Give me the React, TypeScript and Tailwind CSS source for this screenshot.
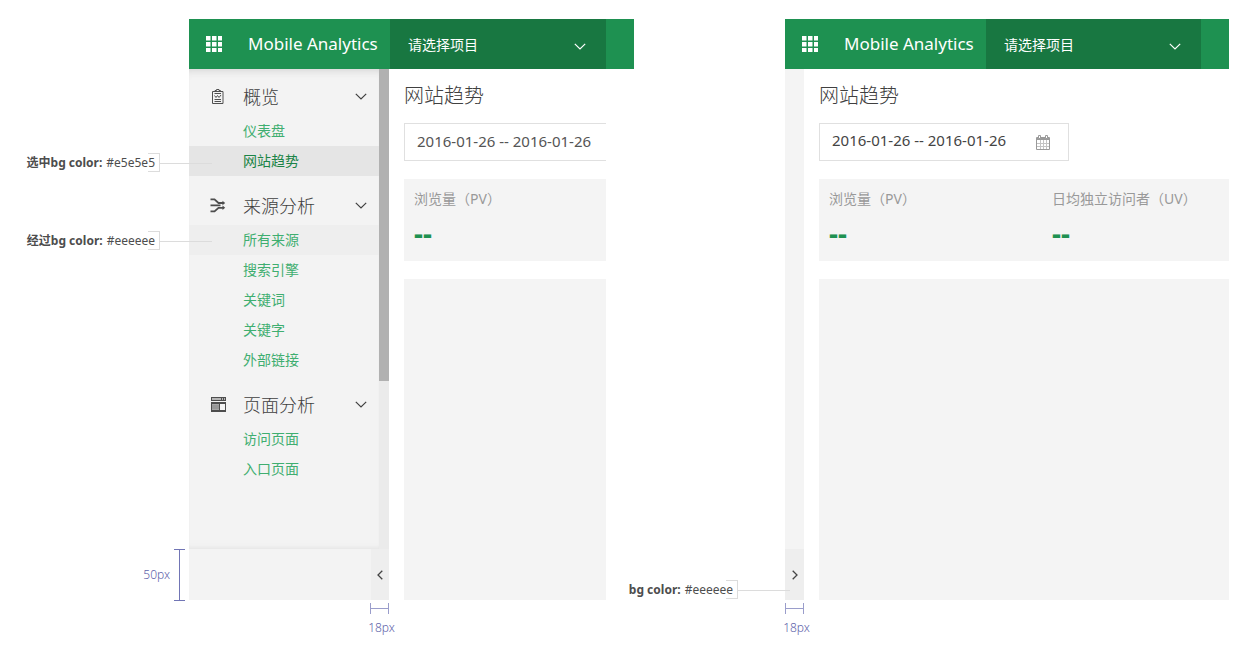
import type { ReactNode } from "react";

type NavItem = { label: string; state?: "selected" | "hover" };
type NavSection = { title: string; icon: ReactNode; items: NavItem[] };

function ReportIcon() {
  return (
    <svg width="12" height="15" viewBox="0 0 12 15" fill="none" stroke="#505050" aria-hidden="true">
      <path d="M.5 2.500h10.500v12H.5z" />
      <path d="M3 2.500v-1h1.500V.5h2.500v1h1.500v1" />
      <path d="M2.500 4.500h6.500M2.500 6.500l1.500 2 1.500-2 1.500 2 2-2.500M2.500 10.500h6.500M2.500 12.500h6.500" />
    </svg>
  );
}

function SourceIcon() {
  return (
    <svg width="16" height="15" viewBox="0 0 16 15" fill="none" stroke="#4d4d4d" strokeWidth="1.800" aria-hidden="true">
      <path d="M.5 1.400h4L8.500 5h5.500M.5 7.400h10M.5 13.400h4L8.500 9.800h5.500" />
      <path d="M12.500 2.800l2.700 2.200-2.700 2.200zM12.500 7.600l2.700 2.200-2.700 2.200z" fill="#4d4d4d" stroke="none" />
    </svg>
  );
}

function PageIcon() {
  return (
    <svg width="15" height="15" viewBox="0 0 15 15" aria-hidden="true">
      <path d="M0 0h15v4H0z" fill="#4d4d4d" />
      <path d="M1 1.300h9v1.400H1zM11 1.300h1v1.400h-1zM13 1.300h1v1.400h-1z" fill="#d8d8d8" />
      <path d="M0 5h15v10H0z" fill="#4d4d4d" />
      <path d="M1 7h7v6H1z" fill="#a8a8a8" />
      <path d="M1 8.500h7v1H1zM1 10.500h7v1H1z" fill="#888" />
      <path d="M9 7h5v6H9z" fill="#f3f3f3" />
    </svg>
  );
}

function CalendarIcon() {
  return (
    <svg width="14" height="15" viewBox="0 0 14 15" fill="none" aria-hidden="true">
      <path d="M.5 2.500h13v12H.5z" stroke="#9a9a9a" />
      <path d="M1 3h12v2H1z" fill="#9a9a9a" />
      <path d="M1 8.500h12M1 11.500h12M4.500 5v9M7.500 5v9M10.500 5v9" stroke="#c4c4c4" />
      <path d="M2.500.5h2v3h-2zM9.500.5h2v3h-2z" fill="#fff" stroke="#9a9a9a" />
    </svg>
  );
}

function ChevronDown({ className }: { className?: string }) {
  return (
    <svg className={className} width="12" height="7" viewBox="0 0 12 7" fill="none" stroke="currentColor" strokeWidth="1.200" aria-hidden="true">
      <path d="M.8.800L6 6 11.200.8" />
    </svg>
  );
}

function ChevronSide({ flip }: { flip?: boolean }) {
  return (
    <svg width="6" height="10" viewBox="0 0 6 10" fill="none" stroke="#444" strokeWidth="1.300" aria-hidden="true">
      <path d={flip ? "M.7.700L5 5 .7 9.300" : "M5.300.700L1 5l4.300 4.300"} />
    </svg>
  );
}

const sections: NavSection[] = [
  {
    title: "概览",
    icon: <ReportIcon />,
    items: [{ label: "仪表盘" }, { label: "网站趋势", state: "selected" }],
  },
  {
    title: "来源分析",
    icon: <SourceIcon />,
    items: [
      { label: "所有来源", state: "hover" },
      { label: "搜索引擎" },
      { label: "关键词" },
      { label: "关键字" },
      { label: "外部链接" },
    ],
  },
  {
    title: "页面分析",
    icon: <PageIcon />,
    items: [{ label: "访问页面" }, { label: "入口页面" }],
  },
];

const itemStyles = {
  selected: "bg-[#e5e5e5] text-[#1b8447]",
  hover: "bg-[#eeeeee] text-[#3fae70]",
  normal: "text-[#3fae70]",
};

function TopBar() {
  return (
    <header className="flex h-[50px] bg-[#1e9151] text-white">
      <div className="flex w-[201px] shrink-0 items-center">
        <button type="button" aria-label="应用" className="ml-[17px]">
          <svg width="16" height="16" viewBox="0 0 16 16" fill="#fff" aria-hidden="true">
            <path d="M0 0h4.500v4.500H0zM6 0h4.500v4.500H6zM12 0h4v4.500h-4zM0 6h4.500v4.500H0zM6 6h4.500v4.500H6zM12 6h4v4.500h-4zM0 12h4.500v4H0zM6 12h4.500v4H6zM12 12h4v4h-4z" />
          </svg>
        </button>
        <span className="ml-[26px] text-[17px] whitespace-nowrap">Mobile Analytics</span>
      </div>
      <div className="relative min-w-0 flex-1">
        <select
          aria-label="项目"
          className="h-full w-full appearance-none bg-[#187741] pt-[2px] pl-[18px] text-sm text-white"
        >
          <option>请选择项目</option>
        </select>
        <ChevronDown className="pointer-events-none absolute top-6 right-5" />
      </div>
      <div className="w-[28px] shrink-0" />
    </header>
  );
}

function Sidebar() {
  return (
    <div className="w-[200px] shrink-0">
      <div className="flex h-[480px]">
        <nav className="min-w-0 flex-1 bg-[#f3f3f3] pt-2 shadow-[inset_0_8px_8px_-7px_#cfcfcf,inset_0_-5px_5px_-4px_#e2e2e2]">
          <div className="flex flex-col gap-[10px]">
            {sections.map((section) => (
              <section key={section.title}>
                <button type="button" className="flex h-[39px] w-full items-center pr-3 text-left text-[#404040]">
                  <span className="ml-[20px] flex w-[18px] justify-center">{section.icon}</span>
                  <span className="ml-4 flex-1 text-lg font-light">{section.title}</span>
                  <ChevronDown />
                </button>
                <ul>
                  {section.items.map((item) => (
                    <li key={item.label}>
                      <a
                        href="#"
                        className={`flex h-[30px] items-center pl-[54px] text-sm ${itemStyles[item.state ?? "normal"]}`}
                      >
                        {item.label}
                      </a>
                    </li>
                  ))}
                </ul>
              </section>
            ))}
          </div>
        </nav>
        <div className="w-[10px] bg-[#ebebeb]">
          <div className="h-[65%] bg-[#b1b1b1]" />
        </div>
      </div>
      <div className="flex h-[51px] justify-end bg-[#f3f3f3]">
        <button type="button" aria-label="收起" className="flex w-[18px] items-center justify-center bg-[#eeeeee]">
          <ChevronSide />
        </button>
      </div>
      <WidthMark className="ml-auto" />
    </div>
  );
}

function WidthMark({ className = "" }: { className?: string }) {
  return (
    <div className={`mt-[3px] flex w-[19px] flex-col items-center text-[#5e62aa] ${className}`}>
      <div className="flex h-[11px] w-full items-center border-x border-[#9a9dcb]">
        <div className="h-px w-full bg-[#9a9dcb]" />
      </div>
      <span className="mt-[4px] ml-1 text-xs leading-5 font-light">18px</span>
    </div>
  );
}

function Note({ name, value }: { name: string; value: string }) {
  return (
    <p className="relative z-10 flex h-[19px] w-max items-center gap-1 pr-[5px] text-xs text-[#4d4d4d]">
      <b>{name}</b>
      <span>{value}</span>
      <span className="absolute inset-y-0 right-0 w-3 border-y border-r border-[#dcdcdc]" />
      <span className="absolute top-1/2 left-full h-px w-[52px] bg-[#dcdcdc]" />
    </p>
  );
}

function Stat({ label, unit }: { label: string; unit: string }) {
  return (
    <div className="pl-[10px]">
      <p className="text-sm leading-5 whitespace-nowrap text-[#999999]">
        {label}
        <span className="font-['Noto_Sans','Noto_Sans_CJK_TC',sans-serif]">（{unit}）</span>
      </p>
      <p className="mt-2 text-[28px] leading-8 font-bold text-[#1e9151]">--</p>
    </div>
  );
}

export default function App() {
  return (
    <div className="grid min-h-screen grid-cols-[minmax(0,189fr)_minmax(0,445fr)_minmax(0,151fr)_minmax(0,444fr)_minmax(0,26fr)] bg-white font-['Noto_Sans','Noto_Sans_CJK_SC',sans-serif]">
      <aside className="flex flex-col items-end pt-[153px]">
        <div className="mr-[29px] flex flex-col items-end gap-[59px]">
          <Note name="选中bg color:" value="#e5e5e5" />
          <Note name="经过bg color:" value="#eeeeee" />
        </div>
        <div className="mt-[299px] mr-[4px] flex items-center gap-1 text-[#5e62aa]">
          <span className="text-xs font-light">50px</span>
          <div className="flex h-[52px] w-[11px] justify-center border-y border-[#7175b5]">
            <div className="w-px bg-[#7175b5]" />
          </div>
        </div>
      </aside>

      <div className="pt-[19px]">
        <TopBar />
        <div className="flex">
          <Sidebar />
          <main className="flex h-[531px] min-w-0 flex-1 flex-col pr-[28px] pl-[15px]">
            <h1 className="pt-[12px] text-xl leading-[30px] font-light text-[#404040]">网站趋势</h1>
            <input
              aria-label="日期范围"
              readOnly
              value="2016-01-26 -- 2016-01-26"
              className="mt-3 h-[38px] w-full border border-r-0 border-[#e0e0e0] pb-[3px] pl-3 text-[15px] text-[#555555]"
            />
            <div className="mt-[18px] h-[82px] bg-[#f4f4f4] pt-[10px]">
              <Stat label="浏览量" unit="PV" />
            </div>
            <div className="mt-[18px] flex-1 bg-[#f4f4f4]" />
          </main>
        </div>
      </div>

      <aside className="flex flex-col items-end pt-[580px] pr-[47px]">
        <Note name="bg color:" value="#eeeeee" />
      </aside>

      <div className="pt-[19px]">
        <TopBar />
        <div className="flex">
          <div className="w-[19px] shrink-0">
            <div className="h-[480px] bg-[#f4f4f4]" />
            <button type="button" aria-label="展开" className="flex h-[51px] w-full items-center justify-center bg-[#eeeeee]">
              <ChevronSide flip />
            </button>
            <WidthMark />
          </div>
          <main className="flex h-[531px] min-w-0 flex-1 flex-col pl-[15px]">
            <h1 className="pt-[12px] text-xl leading-[30px] font-light text-[#404040]">网站趋势</h1>
            <div className="mt-3 flex h-[38px] w-[250px] items-center border border-[#e0e0e0] pr-[18px] pl-3">
              <input
                aria-label="日期范围"
                readOnly
                value="2016-01-26 -- 2016-01-26"
                className="min-w-0 flex-1 pb-[3px] text-[15px] text-[#444444]"
              />
              <button type="button" aria-label="选择日期">
                <CalendarIcon />
              </button>
            </div>
            <div className="mt-[18px] grid h-[82px] grid-cols-[223fr_187fr] bg-[#f4f4f4] pt-[10px]">
              <Stat label="浏览量" unit="PV" />
              <Stat label="日均独立访问者" unit="UV" />
            </div>
            <div className="mt-[18px] flex-1 bg-[#f4f4f4]" />
          </main>
        </div>
      </div>
    </div>
  );
}
